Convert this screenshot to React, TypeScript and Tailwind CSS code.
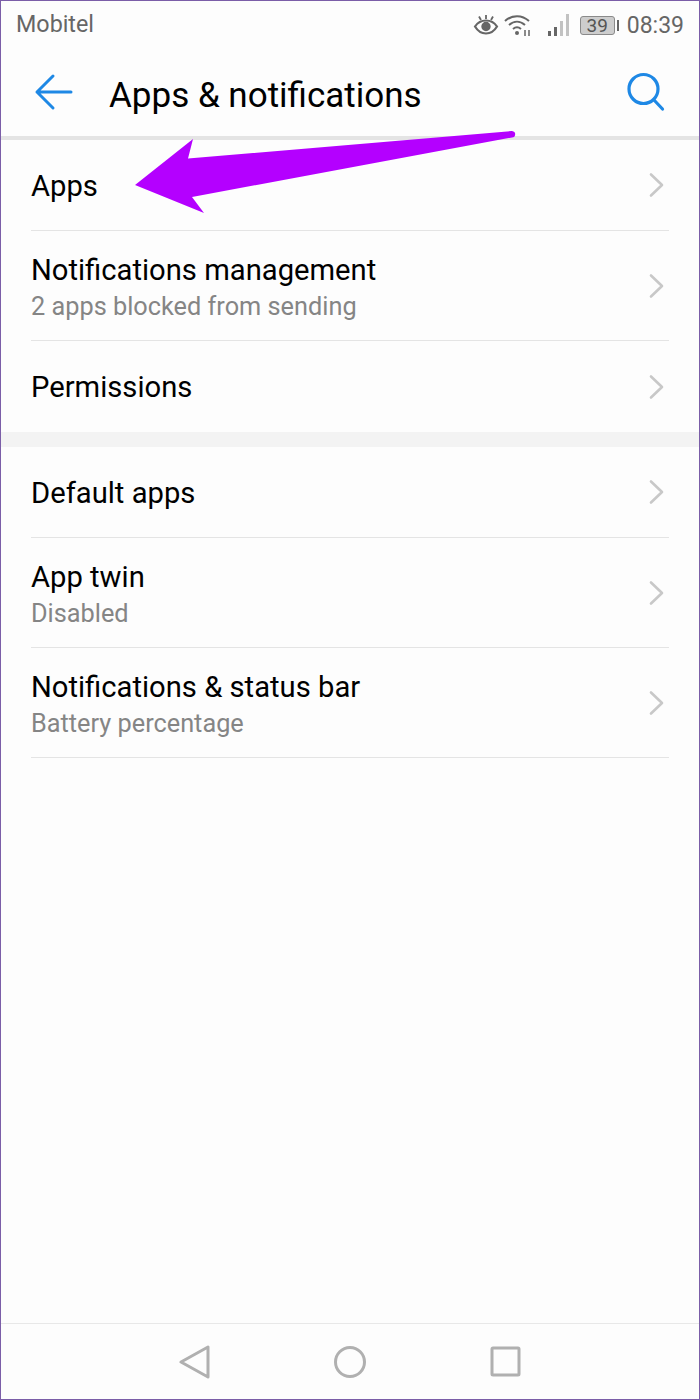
const Chevron = () => (
    <svg width="20" height="26" viewBox="0 0 20 26" fill="none" stroke="#c8c8c8" strokeWidth="2.6" strokeLinecap="round" strokeLinejoin="round" className="shrink-0">
        <path d="M2 2.500 13 13 2 23.500" />
    </svg>
);

const Row = ({ title, sub, h }: { title: string; sub?: string; h: string }) => (
    <div className={`${h} flex items-center justify-between border-b border-[#e4e4e4]`}>
        <div className={sub ? 'pt-[5px]' : 'pt-[1px]'}>
            <div className="text-[29.200px] leading-[36px] text-black">{title}</div>
            {sub && <div className="text-[25.300px] leading-[37px] text-[#858585]">{sub}</div>}
        </div>
        <Chevron />
    </div>
);

const StatusIcons = () => (
    <div className="flex items-center text-[#666666]">
        <svg width="26" height="22" viewBox="0 0 26 22" fill="none" stroke="#666666" strokeWidth="2.2" className="mr-[5px]">
            <path d="M2 12.500C5 8 8.500 6.500 13 6.500s8 1.500 11 6c-3 5-6.500 7-11 7s-8-2-11-7Z" />
            <circle cx="13" cy="12.500" r="3.600" fill="#666666" />
            <path d="M13 1v4M6 2.500l2 3.500M20 2.500l-2 3.500" strokeWidth="1.800" />
        </svg>
        <svg width="28" height="24" viewBox="0 0 28 24" fill="none" stroke="#666666" strokeWidth="2" className="mr-[15px]">
            <path d="M1 8c7-6.500 17-6.500 24 0" />
            <path d="M5 12c5-4.500 11-4.500 16 0" />
            <path d="M9 16c3-2.500 5-2.500 8 0" />
            <circle cx="13" cy="20" r="2" fill="#666666" stroke="none" />
            <path d="M21 17v6M25 17v6" strokeWidth="1.500" />
        </svg>
        <svg width="24" height="24" viewBox="0 0 24 24" className="mr-[9px]">
            <rect x="1" y="18" width="3" height="5" fill="#666666" />
            <rect x="7" y="14" width="3" height="9" fill="#666666" />
            <rect x="13" y="8" width="3" height="15" fill="#c2c2c2" />
            <rect x="19" y="1" width="3" height="22" fill="#c2c2c2" />
        </svg>
        <div className="w-[35px] h-[19px] border border-[#8a8a8a] rounded-[3px] bg-[#cdcdcd] flex items-center justify-center text-[19px] leading-none text-[#555555]">
            39
        </div>
        <div className="w-[2px] h-[11px] bg-[#666666] ml-[2px] mr-[8px]"></div>
        <span className="text-[23px] leading-none">08:39</span>
    </div>
);

export default function App() {
    return (
        <div className="relative w-[700px] h-[1400px] bg-[#fdfdfd] border border-[#7b5ea8] font-['Roboto',sans-serif] flex flex-col overflow-hidden">
            {/* status bar */}
            <div className="h-[47px] flex items-center justify-between pl-[15px] pr-[15px] pt-[1px] shrink-0">
                <span className="text-[23.300px] leading-none text-[#666666]">Mobitel</span>
                <StatusIcons />
            </div>

            {/* toolbar */}
            <div className="h-[88px] flex items-center shrink-0 border-b-[4px] border-[#e4e4e4] box-content">
                <svg width="40" height="40" viewBox="0 0 40 40" fill="none" stroke="#1e88e5" strokeWidth="3" strokeLinecap="round" strokeLinejoin="round" className="ml-[33px]">
                    <path d="M3 20h34M19 4 3 20l16 16" />
                </svg>
                <h1 className="ml-[35px] pt-[7px] text-[35px] leading-none font-normal text-black">Apps &amp; notifications</h1>
                <svg width="40" height="40" viewBox="0 0 40 40" fill="none" stroke="#1e88e5" strokeWidth="3.200" strokeLinecap="round" className="ml-auto mr-[33px]">
                    <circle cx="17.500" cy="17" r="14.500" />
                    <path d="M28 28l8.500 9" />
                </svg>
            </div>

            {/* first group */}
            <div className="px-[30px]">
                <Row title="Apps" h="h-[91px]" />
                <Row title="Notifications management" sub="2 apps blocked from sending" h="h-[110px]" />
                <div className="h-[91px] flex items-center justify-between">
                    <div className="text-[29.200px] leading-[36px] text-black">Permissions</div>
                    <Chevron />
                </div>
            </div>

            <div className="h-[15px] bg-[#f3f3f3] shrink-0"></div>

            {/* second group */}
            <div className="px-[30px]">
                <Row title="Default apps" h="h-[91px]" />
                <Row title="App twin" sub="Disabled" h="h-[110px]" />
                <Row title="Notifications & status bar" sub="Battery percentage" h="h-[110px]" />
            </div>

            {/* nav bar */}
            <div className="mt-auto h-[76px] border-t border-[#e8e8e8] flex items-center justify-center gap-[121px] shrink-0">
                <svg width="34" height="34" viewBox="0 0 34 34" fill="none" stroke="#b0b0b0" strokeWidth="3" strokeLinejoin="round">
                    <path d="M30 2v30L3 17Z" />
                </svg>
                <svg width="34" height="34" viewBox="0 0 34 34" fill="none" stroke="#b0b0b0" strokeWidth="3">
                    <circle cx="17" cy="17" r="14.500" />
                </svg>
                <svg width="34" height="34" viewBox="0 0 34 34" fill="none" stroke="#b0b0b0" strokeWidth="3" strokeLinejoin="round">
                    <rect x="4" y="3" width="27" height="27" rx="1" />
                </svg>
            </div>

            {/* annotation arrow */}
            <svg width="700" height="1400" viewBox="0 0 700 1400" className="absolute left-[-1px] top-[-1px] pointer-events-none">
                <path d="M135 185 193 139 188 158.500 512 131 Q516 132 515 135 Q515 137 512 137.500L192 197 204 213Z" fill="#b400ff" />
            </svg>
        </div>
    );
}
